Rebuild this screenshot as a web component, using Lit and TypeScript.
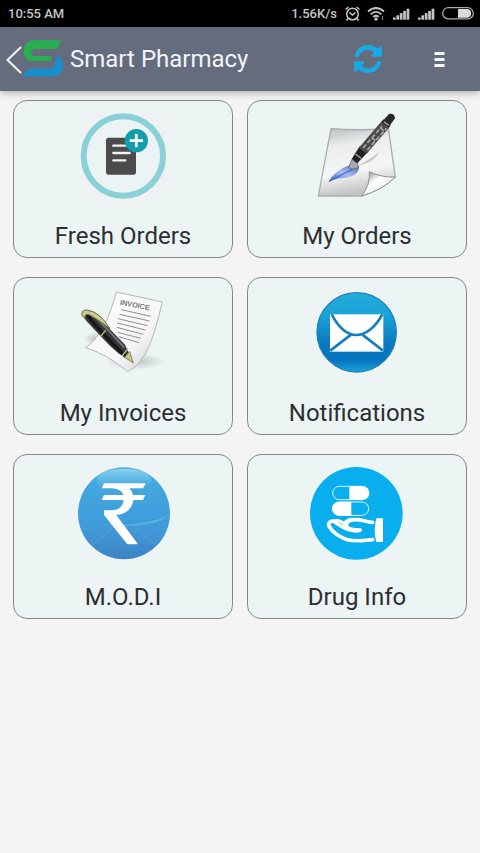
import { LitElement, html, css, svg } from "lit";
import { customElement } from "lit/decorators.js";

const freshOrders = html`<svg class="art" viewBox="-6 0 330 300" aria-hidden="true">
  <rect x="33" y="24" width="255" height="258" fill="#eff2f3" />
  <circle cx="160" cy="153" r="119" fill="#ecf3f4" stroke="#89d1d6" stroke-width="18" />
  <rect x="108" y="98" width="90" height="111" rx="8" fill="#4b4b4b" />
  <path d="M130 122h40M130 144h49M130 166h36" stroke="#f1f4f4" stroke-width="7" stroke-linecap="round" />
  <circle cx="199" cy="107" r="35" fill="#129fad" />
  <path d="M199 87v40M179 107h40" stroke="#fff" stroke-width="8" />
</svg>`;

const myOrders = html`<svg class="art" viewBox="-9 0 330 300" aria-hidden="true">
  <defs>
    <linearGradient id="sheet" x1="0" y1="0" x2="0.2" y2="1">
      <stop offset="0" stop-color="#b4b8b8" /><stop offset="0.3" stop-color="#eceeee" />
      <stop offset="0.7" stop-color="#f5f6f6" /><stop offset="1" stop-color="#c2c5c5" />
    </linearGradient>
    <linearGradient id="curl" x1="0" y1="0" x2="1" y2="1">
      <stop offset="0.1" stop-color="#999" /><stop offset="0.4" stop-color="#fff" /><stop offset="1" stop-color="#ddd" />
    </linearGradient>
    <linearGradient id="ink" x1="0" y1="1" x2="1" y2="0">
      <stop offset="0" stop-color="#2f55c8" /><stop offset="0.5" stop-color="#a9bff0" /><stop offset="1" stop-color="#4a66b8" />
    </linearGradient>
  </defs>
  <path d="M40 273L78 71Q170 78 250 70L271 216Q225 256 170 273Z" fill="url(#sheet)" stroke="#a9adad" stroke-width="4" />
  <path d="M170 273Q196 240 193 200Q230 218 271 216Q232 255 170 273Z" fill="url(#curl)" stroke="#8d9191" stroke-width="3" />
  <path d="M155 182Q190 168 222 140Q208 174 155 182Z" fill="#8a9090" opacity="0.4" />
  <path d="M70 230Q93 193 136 180L163 184Q161 213 125 218Q96 218 70 230Z" fill="url(#ink)" />
  <path d="M73 229Q110 208 145 192" fill="none" stroke="#345bc8" stroke-width="3" />
  <path d="M131 188L140 164L157 174L160 188Q145 196 131 188Z" fill="#a7abad" stroke="#55585a" stroke-width="2" />
  <path d="M140 162L164 124L188 142L157 175Z" fill="#222" />
  <path d="M161 129L235 43L257 62L185 146Z" fill="#4b4b4c" />
  <path d="M174 129L231 64M187 135L244 70M200 98L216 111M225 68L239 79" stroke="#aaa" stroke-width="5" stroke-dasharray="14 6" />
  <path d="M230 51L252 27Q268 24 270 40L251 67Z" fill="#292929" />
  <path d="M237 50L251 61M152 148L168 160" stroke="#b2b2b2" stroke-width="4" />
</svg>`;

const myInvoices = html`<svg class="art" viewBox="-6 0 330 300" aria-hidden="true">
  <defs>
    <linearGradient id="page" x1="0" y1="0" x2="1" y2="1">
      <stop offset="0" stop-color="#fff" /><stop offset="0.65" stop-color="#f5f5f8" /><stop offset="1" stop-color="#c9cacf" />
    </linearGradient>
    <radialGradient id="shade"><stop offset="0" stop-color="#8b9090" stop-opacity="0.5" /><stop offset="1" stop-color="#8b9090" stop-opacity="0" /></radialGradient>
  </defs>
  <ellipse cx="195" cy="238" rx="90" ry="26" fill="url(#shade)" />
  <ellipse cx="80" cy="170" rx="40" ry="20" fill="url(#shade)" />
  <path d="M139 30L277 60Q258 140 239 190Q212 250 173 269Q110 215 46 197Q105 160 139 30Z" fill="url(#page)" stroke="#b4b6b9" stroke-width="3" />
  <text class="invoice" x="149" y="68" transform="rotate(11 149 68)">INVOICE</text>
  <path d="M154 83L242 103M149 97L239 117M144 110L232 131M142 123L226 144M140 136L220 157M143 151L213 169M146 164L207 182" stroke="#8d8f94" stroke-width="3" />
  <path d="M38 90Q50 78 72 92L165 188L189 240Q145 222 98 169L52 120Q38 105 38 90Z" fill="#38383b" />
  <path d="M49 96Q89 148 165 221" fill="none" stroke="#17181a" stroke-width="11" />
  <path d="M75 104Q122 152 163 197" fill="none" stroke="#77787b" stroke-width="5" />
  <path d="M36 101Q32 84 52 84Q91 90 120 141Q88 114 59 99Q43 94 45 108Z" fill="#c9ca92" stroke="#66683d" stroke-width="3" />
  <path d="M91 164L107 145M156 222L174 200" stroke="#c6c78b" stroke-width="4" />
  <path d="M164 226L179 208L190 243Z" fill="#c6c683" stroke="#68693e" stroke-width="2" />
</svg>`;

const notifications = html`<svg class="art" viewBox="-9 0 330 300" aria-hidden="true">
  <defs>
    <linearGradient id="orb" x1="0" y1="0" x2="0" y2="1">
      <stop offset="0" stop-color="#23acdb" /><stop offset="0.3" stop-color="#1ba2d8" />
      <stop offset="0.65" stop-color="#0878c0" /><stop offset="0.85" stop-color="#0873bd" /><stop offset="1" stop-color="#18a4dc" />
    </linearGradient>
  </defs>
  <circle cx="155" cy="151" r="119" fill="url(#orb)" stroke="#1b83b8" stroke-width="4" />
  <rect x="75" y="97" width="160" height="112" fill="#fff" />
  <path d="M80 97C105 145 130 159 155 159C180 159 210 138 232 97M76 206L138 158M234 206L172 158" fill="none" stroke="#147fb8" stroke-width="8" />
</svg>`;

const modi = html`<svg class="art tall" viewBox="0 0 345 321" aria-hidden="true">
  <defs>
    <linearGradient id="coin" x1="0" y1="0" x2="0" y2="1">
      <stop offset="0" stop-color="#48acdf" /><stop offset="0.55" stop-color="#3e9edc" />
      <stop offset="0.75" stop-color="#4294d4" /><stop offset="1" stop-color="#3b82c4" />
    </linearGradient>
    <linearGradient id="gloss" x1="0" y1="0" x2="0" y2="1">
      <stop offset="0" stop-color="#8fd2f0" /><stop offset="1" stop-color="#55b2e2" stop-opacity="0" />
    </linearGradient>
  </defs>
  <circle cx="174" cy="163" r="138" fill="url(#coin)" />
  <ellipse cx="174" cy="64" rx="82" ry="35" fill="url(#gloss)" />
  <path d="M90 192Q200 210 305 172Q280 198 174 201Q120 201 90 192Z" fill="#77c3ed" opacity="0.5" />
  <path d="M80 260L150 194M268 260L198 194" stroke="#78b9e5" stroke-width="2" opacity="0.5" />
  <path d="M114 73H239L231 88H190Q199 96 201 108H238L231 123H202Q196 163 151 168L216 256H184L114 168V154H139Q170 152 173 123H107L114 108H172Q168 91 140 88H107Z" fill="#fff" />
</svg>`;

const drugInfo = html`<svg class="art tall" viewBox="0 0 345 321" aria-hidden="true">
  <circle cx="169" cy="163" r="139" fill="#08aeed" />
  <rect x="98" y="82" width="108" height="40" rx="20" fill="none" stroke="#d9f4fd" stroke-width="3" />
  <path d="M148 81H187A21 21 0 0 1 187 123H148Z" fill="#fff" />
  <rect x="98" y="129" width="108" height="40" rx="20" fill="none" stroke="#d9f4fd" stroke-width="3" />
  <path d="M154 128H117A21 21 0 0 0 117 170H154Z" fill="#fff" />
  <path d="M218 190C200 190 188 182 168 182C151 182 139 188 139 199C139 211 153 213 181 213C165 219 145 213 126 203L103 188C92 182 82 193 88 203C96 219 119 235 142 242C170 249 190 244 218 242" fill="none" stroke="#fff" stroke-width="11" stroke-linecap="round" stroke-linejoin="round" />
  <path d="M100 186Q118 180 132 194Q145 177 168 182" fill="none" stroke="#fff" stroke-width="9" />
  <path d="M229 178H249V249H229Q219 215 229 178Z" fill="#fff" />
</svg>`;

const tiles = [
  { label: "Fresh Orders", art: freshOrders },
  { label: "My Orders", art: myOrders },
  { label: "My Invoices", art: myInvoices },
  { label: "Notifications", art: notifications },
  { label: "M.O.D.I", art: modi },
  { label: "Drug Info", art: drugInfo },
];

const signal = () => html`<svg width="18" height="14" viewBox="0 0 18 14" aria-hidden="true">
  ${[0, 1, 2, 3, 4].map((i) => svg`<rect x=${1 + i * 3.4} y=${10.5 - i * 2.2} width="2.7" height=${2.2 + i * 2.2} fill="#c6c6c6" />`)}
</svg>`;

@customElement("app-root")
export class AppRoot extends LitElement {
  static styles = css`
    :host {
      display: block;
      min-height: 100vh;
      background: #f4f4f4;
      font-family: Roboto, "Noto Sans", sans-serif;
    }
    svg {
      display: block;
      flex: none;
    }
    .status {
      display: flex;
      align-items: center;
      justify-content: space-between;
      height: 27px;
      padding: 0 6px 0 8px;
      background: #000;
      color: #c6c6c6;
      font-size: 13px;
      font-weight: 500;
    }
    .indicators {
      display: flex;
      align-items: center;
      gap: 7px;
    }
    .bar {
      display: flex;
      align-items: center;
      height: 64px;
      padding: 0 20px 0 4px;
      background: #646c7e;
      box-shadow: 0 1px 8px rgba(0, 0, 0, 0.35);
    }
    button {
      margin: 0;
      padding: 0;
      border: 0;
      background: none;
      color: inherit;
      font: inherit;
      cursor: pointer;
    }
    .home {
      display: flex;
      align-items: center;
    }
    .title {
      flex: 1;
      margin: 0;
      padding-left: 6px;
      color: #f2f4fa;
      font-size: 24px;
      font-weight: 400;
      line-height: 32px;
    }
    .actions {
      display: flex;
      align-items: center;
      gap: 38px;
    }
    .grid {
      display: grid;
      grid-template-columns: 1fr 1fr;
      gap: 19px 14px;
      padding: 9px 13px;
    }
    .tile {
      display: flex;
      flex-direction: column;
      align-items: center;
      gap: 13px;
      padding: 4px 4px 3px;
      border: 1px solid #858888;
      border-radius: 14px;
      background: #edf4f4;
      color: #2b2f31;
      font-size: 24px;
      line-height: 36px;
    }
    .art {
      width: 110px;
      height: 100px;
    }
    .tall {
      width: 115px;
      height: 107px;
    }
    .invoice {
      fill: #77797f;
      font: 700 22px "Liberation Sans", sans-serif;
    }
  `;

  render() {
    return html`
      <div class="status">
        <span>10:55 AM</span>
        <div class="indicators">
          <span>1.56K/s</span>
          <svg width="16" height="16" viewBox="0 0 16 16" fill="none" stroke="#c6c6c6" stroke-width="1.5" aria-hidden="true">
            <circle cx="8.500" cy="8" r="5.8" />
            <path d="M1.500 3.500L4.500 1M12.500 1L15.500 3.500M5.500 6.500L8.500 9L11.500 6.500M4 12.500L2.500 14.500M13 12.500L14.500 14.500" />
          </svg>
          <svg width="18" height="14" viewBox="0 0 18 14" fill="none" stroke="#c6c6c6" stroke-width="1.8" aria-hidden="true">
            <path d="M1 4.500Q9 -2.500 17 4.500M3.6 7.3Q9 2.500 14.4 7.3M6.2 9.900Q9 7.500 11.8 9.900" />
            <circle cx="9" cy="12" r="0.8" fill="#c6c6c6" />
            <path d="M15.5 9V13" stroke-width="1.2" opacity="0.6" />
          </svg>
          ${signal()} ${signal()}
          <svg width="32" height="13" viewBox="0 0 32 13" aria-hidden="true">
            <rect x="0.7" y="0.7" width="30.6" height="11.2" rx="5.6" fill="none" stroke="#aaa" stroke-width="1.3" />
            <path d="M16 2H25.5A4.4 4.4 0 0 1 25.5 10.7H16Z" fill="#dcdcdc" />
          </svg>
        </div>
      </div>
      <header class="bar">
        <button class="home" aria-label="Back">
          <svg width="18" height="36" viewBox="0 0 18 36" aria-hidden="true">
            <path d="M17 6L3.500 19L17 32" fill="none" stroke="#f4f5f8" stroke-width="2" />
          </svg>
          <svg width="42" height="38" viewBox="3 6 126 114" aria-hidden="true">
            <path d="M121 7H37C0 7 0 69 29 69H89Q96 62 89 54H37Q22 43 39 33H106Q114 27 121 7Z" fill="#2bad52" />
            <path d="M106 53Q126 60 126 82Q124 115 92 115H5Q14 98 26 92H84Q102 91 104 69Z" fill="#168fcd" />
          </svg>
        </button>
        <h1 class="title">Smart Pharmacy</h1>
        <div class="actions">
          <button aria-label="Refresh">
            <svg width="28" height="28" viewBox="0 0 1536 1536" fill="#19a9e5" aria-hidden="true">
              <path d="M1511 928q0 5-1 7-64 268-268 434.500t-478 166.500q-146 0-282.500-55t-243.500-157l-129 129q-19 19-45 19t-45-19-19-45v-448q0-26 19-45t45-19h448q26 0 45 19t19 45-19 45l-137 137q71 66 161 102t187 36q134 0 250-65t186-179q11-17 53-117 8-23 30-23h192q13 0 22.500 9.500t9.500 22.500zM1536 128v448q0 26-19 45t-45 19h-448q-26 0-45-19t-19-45 19-45l138-138q-148-137-349-137-134 0-250 65t-186 179q-11 17-53 117-8 23-30 23h-199q-13 0-22.500-9.500t-9.500-22.500v-7q65-268 270-434.500t480-166.500q146 0 284 55.500t245 156.500l130-129q19-19 45-19t45 19 19 45z" />
            </svg>
          </button>
          <button aria-label="More options">
            <svg width="40" height="28" viewBox="0 0 40 28" fill="#f5f6f9" aria-hidden="true">
              <path d="M14.500 7h10v3h-10zM14.500 13h10v3h-10zM14.500 19h10v3h-10z" />
            </svg>
          </button>
        </div>
      </header>
      <main class="grid">
        ${tiles.map((t) => html`<button class="tile">${t.art}<span>${t.label}</span></button>`)}
      </main>
    `;
  }
}
